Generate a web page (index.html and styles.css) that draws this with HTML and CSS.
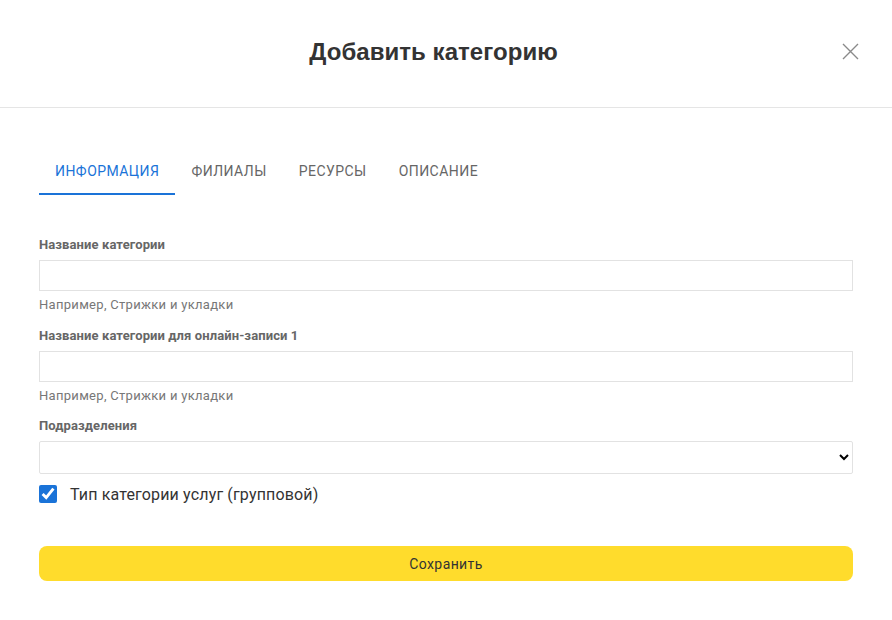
FILE: index.html
```html
<!DOCTYPE html>
<html lang="ru">
<head>
<meta charset="utf-8">
<title>Добавить категорию</title>
<link rel="stylesheet" href="styles.css">
</head>
<body>
<div class="modal">
  <header class="modal-header">
    <span></span>
    <h1 class="modal-title">Добавить категорию</h1>
    <button class="close-btn" type="button" aria-label="Закрыть">
      <svg width="17" height="17" viewBox="0 0 17 17"><path d="M1 1L16 16M16 1L1 16" stroke="#8a8a8a" stroke-width="1.4" fill="none"/></svg>
    </button>
  </header>
  <div class="modal-body">
    <nav class="tabs">
      <a class="tab active">Информация</a>
      <a class="tab">Филиалы</a>
      <a class="tab">Ресурсы</a>
      <a class="tab">Описание</a>
    </nav>
    <form class="form">
      <div class="field">
        <label class="label">Название категории</label>
        <input class="input" type="text">
        <div class="hint">Например, Стрижки и укладки</div>
      </div>
      <div class="field">
        <label class="label">Название категории для онлайн-записи 1</label>
        <input class="input" type="text">
        <div class="hint">Например, Стрижки и укладки</div>
      </div>
      <div class="field field-last">
        <label class="label">Подразделения</label>
        <select class="select"><option></option></select>
      </div>
      <label class="check-row">
        <input type="checkbox" class="checkbox" checked>
        <span>Тип категории услуг (групповой)</span>
      </label>
      <button class="save-btn" type="button">Сохранить</button>
    </form>
  </div>
</div>
</body>
</html>
```
FILE: styles.css
```css
* { box-sizing: border-box; }
html, body { margin: 0; padding: 0; background: #fff; }
body { font-family: Roboto, "Noto Sans", sans-serif; color: #333; }

.modal-header {
  height: 108px;
  border-bottom: 1px solid #e5e5e5;
  display: grid;
  grid-template-columns: 1fr auto 1fr;
  align-items: center;
  padding: 0 33px 4px 8px;
}
.modal-title {
  margin: 0;
  font-family: "Liberation Sans", Arial, sans-serif;
  font-weight: 700;
  font-size: 24px;
  color: #333;
  letter-spacing: 0.05px;
}
.close-btn {
  justify-self: end;
  border: 0;
  background: none;
  padding: 0;
  width: 17px;
  height: 17px;
  display: flex;
  cursor: pointer;
}

.modal-body { padding: 39px 39px 0 39px; }

.tabs { display: flex; height: 48px; }
.tab {
  display: flex;
  align-items: center;
  padding: 0 16px;
  font-size: 14px;
  font-weight: 400;
  text-transform: uppercase;
  letter-spacing: 0.45px;
  color: #666;
  border-bottom: 2px solid transparent;
  padding-top: 2px;
}
.tab.active { color: #1a73d8; border-bottom-color: #1a73d8; }

.form { display: flex; flex-direction: column; margin-top: 41px; }
.field { display: flex; flex-direction: column; margin-bottom: 14px; }
.field-last { margin-top: -1px; }
.label {
  font-size: 13px;
  line-height: 16px;
  font-weight: 700;
  letter-spacing: 0.1px;
  color: #666;
  padding-top: 1px;
  margin-bottom: 7px;
}
.input {
  height: 31px;
  border: 1px solid #e2e2e2;
  border-radius: 0;
  font: inherit;
  padding: 0 8px;
  outline: none;
}
.hint {
  font-size: 13px;
  line-height: 16px;
  letter-spacing: 0.3px;
  color: #777;
  margin-top: 6px;
}
.select {
  height: 33px;
  border: 1px solid #e2e2e2;
  border-radius: 2px;
  background: #fff;
  font: inherit;
  padding: 0 6px;
  outline: none;
}
.check-row {
  display: flex;
  align-items: center;
  gap: 13px;
  margin-top: -3px;
  font-size: 16px;
  letter-spacing: 0.15px;
  color: #333;
  height: 18px;
}
.checkbox {
  margin: 0;
  width: 18px;
  height: 18px;
  accent-color: #1a73d8;
}
.save-btn {
  margin-top: 43px;
  height: 35px;
  border: 0;
  border-radius: 8px;
  background: #ffdc2c;
  color: #333;
  font-family: Roboto, sans-serif;
  font-size: 14px;
  letter-spacing: 0.4px;
  cursor: pointer;
}
```
